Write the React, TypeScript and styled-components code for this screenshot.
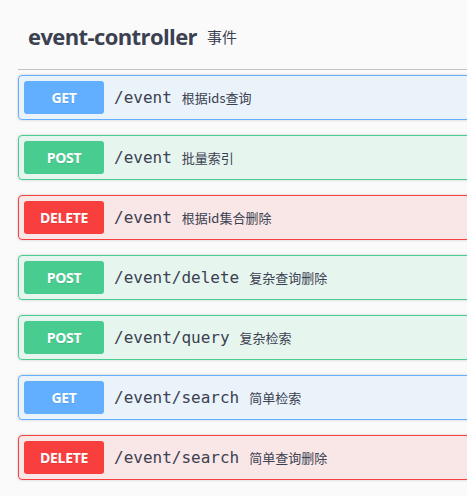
import React from "react";
import styled, { createGlobalStyle } from "styled-components";

const Global = createGlobalStyle`
  html, body { margin: 0; padding: 0; background: #fafafa; overflow: hidden; }
  body { font-family: "Open Sans", "Noto Sans CJK SC", sans-serif; color: #3b4151; }
`;

type Method = "GET" | "POST" | "DELETE";

const palette: Record<Method, { main: string; bg: string }> = {
  GET: { main: "#61affe", bg: "rgba(97,175,254,.1)" },
  POST: { main: "#49cc90", bg: "rgba(73,204,144,.1)" },
  DELETE: { main: "#f93e3e", bg: "rgba(249,62,62,.1)" },
};

const Page = styled.div`
  width: 760px;
  padding-left: 18px;
`;

const TagHeader = styled.div`
  display: flex;
  align-items: center;
  box-sizing: border-box;
  height: 70px;
  padding: 2px 20px 0 10px;
  border-bottom: 1px solid rgba(59, 65, 81, 0.3);
  margin-bottom: 5px;
`;

const TagTitle = styled.span`
  font-family: "Open Sans", sans-serif;
  font-size: 22px;
  font-weight: 700;
  color: #3b4151;
  letter-spacing: -0.6px;
`;

const TagDesc = styled.small`
  font-family: "Noto Sans CJK SC", sans-serif;
  font-size: 15px;
  color: #3b4151;
  padding-left: 10px;
  padding-top: 2px;
`;

const Block = styled.div<{ $m: Method }>`
  display: flex;
  align-items: center;
  padding: 5px;
  margin-bottom: 15px;
  border: 1px solid ${(p) => palette[p.$m].main};
  border-radius: 4px;
  background: ${(p) => palette[p.$m].bg};
  box-shadow: 0 0 3px rgba(0, 0, 0, 0.19);
`;

const Badge = styled.span<{ $m: Method }>`
  box-sizing: border-box;
  min-width: 80px;
  height: 33px;
  display: flex;
  align-items: center;
  justify-content: center;
  border-radius: 3px;
  background: ${(p) => palette[p.$m].main};
  color: #fff;
  font-family: "Open Sans", sans-serif;
  font-size: 14px;
  font-weight: 700;
  letter-spacing: -0.3px;
  text-shadow: 0 1px 0 rgba(0, 0, 0, 0.1);
`;

const Path = styled.span`
  font-family: "DejaVu Sans Mono", monospace;
  font-size: 16px;
  color: #3b4151;
  padding: 0 10px;
`;

const Desc = styled.span`
  font-family: "Noto Sans CJK SC", sans-serif;
  font-size: 13px;
  color: #3b4151;
`;

const ops: { m: Method; path: string; desc: string }[] = [
  { m: "GET", path: "/event", desc: "根据ids查询" },
  { m: "POST", path: "/event", desc: "批量索引" },
  { m: "DELETE", path: "/event", desc: "根据id集合删除" },
  { m: "POST", path: "/event/delete", desc: "复杂查询删除" },
  { m: "POST", path: "/event/query", desc: "复杂检索" },
  { m: "GET", path: "/event/search", desc: "简单检索" },
  { m: "DELETE", path: "/event/search", desc: "简单查询删除" },
];

export default function App() {
  return (
    <>
      <Global />
      <Page>
        <TagHeader>
          <TagTitle>event-controller</TagTitle>
          <TagDesc>事件</TagDesc>
        </TagHeader>
        {ops.map((o, i) => (
          <Block key={i} $m={o.m}>
            <Badge $m={o.m}>{o.m}</Badge>
            <Path>{o.path}</Path>
            <Desc>{o.desc}</Desc>
          </Block>
        ))}
      </Page>
    </>
  );
}
